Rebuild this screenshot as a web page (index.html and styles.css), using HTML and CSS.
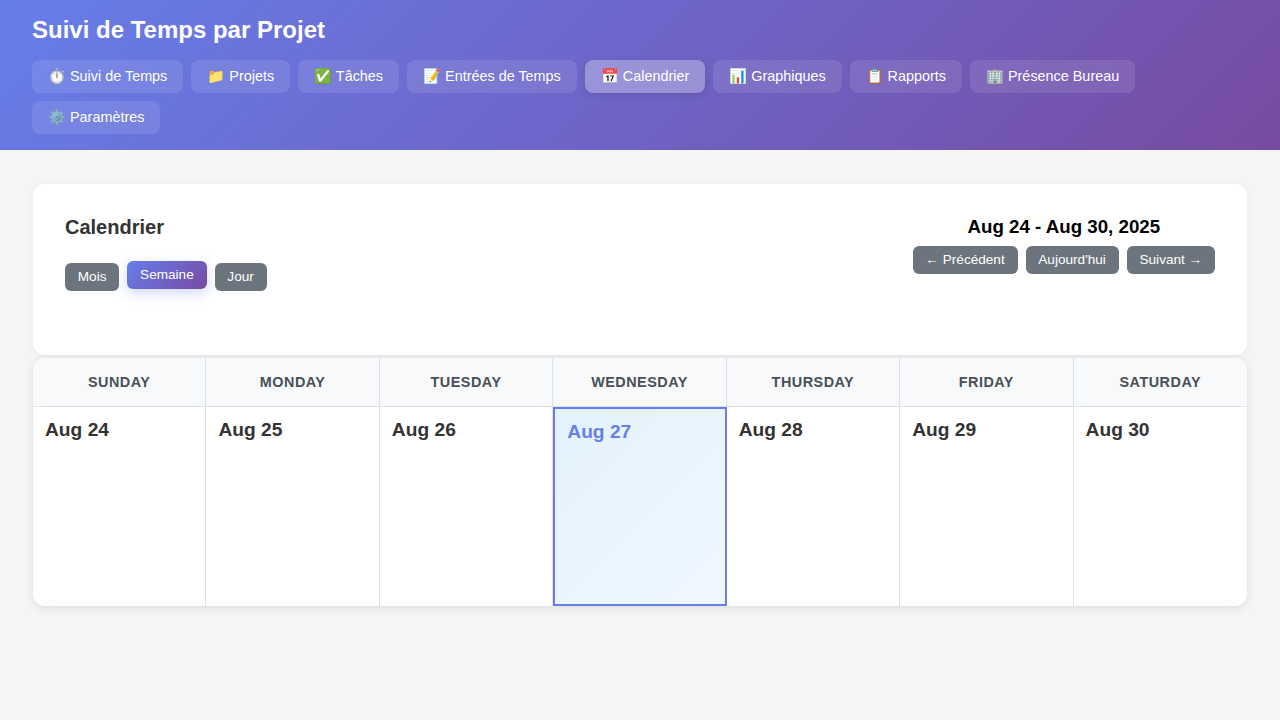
FILE: index.html
```html
<!DOCTYPE html>
<html lang="fr">
<head>
  <meta charset="UTF-8">
  <title>Suivi de Temps par Projet</title>
  <link rel="stylesheet" href="styles.css">
</head>
<body>

<header class="header">
  <h1>Suivi de Temps par Projet</h1>
  <nav class="nav-tabs">
    <button class="nav-tab">⏱️ Suivi de Temps</button>
    <button class="nav-tab">📁 Projets</button>
    <button class="nav-tab">✅ Tâches</button>
    <button class="nav-tab">📝 Entrées de Temps</button>
    <button class="nav-tab active">📅 Calendrier</button>
    <button class="nav-tab">📊 Graphiques</button>
    <button class="nav-tab">📋 Rapports</button>
    <button class="nav-tab">🏢 Présence Bureau</button>
    <button class="nav-tab">⚙️ Paramètres</button>
  </nav>
</header>

<main class="container">
  <section class="card">
    <div class="card-left">
      <h2>Calendrier</h2>
      <div class="view-buttons">
        <button class="btn">Mois</button>
        <button class="btn btn-primary">Semaine</button>
        <button class="btn">Jour</button>
      </div>
    </div>
    <div class="card-right">
      <h3>Aug 24 - Aug 30, 2025</h3>
      <div class="nav-buttons">
        <button class="btn">← Précédent</button>
        <button class="btn">Aujourd'hui</button>
        <button class="btn">Suivant →</button>
      </div>
    </div>
  </section>

  <section class="calendar">
    <div class="day-name">Sunday</div>
    <div class="day-name">Monday</div>
    <div class="day-name">Tuesday</div>
    <div class="day-name">Wednesday</div>
    <div class="day-name">Thursday</div>
    <div class="day-name">Friday</div>
    <div class="day-name">Saturday</div>

    <div class="day"><span class="day-date">Aug 24</span></div>
    <div class="day"><span class="day-date">Aug 25</span></div>
    <div class="day"><span class="day-date">Aug 26</span></div>
    <div class="day today"><span class="day-date">Aug 27</span></div>
    <div class="day"><span class="day-date">Aug 28</span></div>
    <div class="day"><span class="day-date">Aug 29</span></div>
    <div class="day"><span class="day-date">Aug 30</span></div>
  </section>
</main>

</body>
</html>
```

FILE: styles.css
```css
* {
  box-sizing: border-box;
  margin: 0;
  padding: 0;
}
body {
  font-family: "Liberation Sans", Arial, sans-serif;
  background-color: #f5f5f5;
  color: #333;
  min-height: 100vh;
}
button {
  font-family: inherit;
  cursor: pointer;
  border: none;
}
.header {
  height: 150px;
  padding: 16px 32px;
  background: linear-gradient(135deg, #667eea 0%, #764ba2 100%);
  color: white;
}
.header h1 {
  font-size: 24px;
  line-height: 28px;
  font-weight: 700;
  margin-bottom: 16px;
}
.nav-tabs {
  display: flex;
  flex-wrap: wrap;
  gap: 8px;
}
.nav-tab {
  height: 33px;
  padding: 0 16px;
  font-size: 14.4px;
  color: white;
  background: rgba(255,255,255,0.1);
  border-radius: 8px;
}
.nav-tab.active {
  background: rgba(255,255,255,0.3);
  box-shadow: 0 2px 8px rgba(0,0,0,0.1);
}
.container {
  padding: 34px 33px 32px 33px;
}
.card {
  display: flex;
  justify-content: space-between;
  height: 171px;
  padding: 32px;
  margin-bottom: 3px;
  background: white;
  border-radius: 12px;
  box-shadow: 0 2px 10px rgba(0,0,0,0.05);
}
.card h2 {
  font-size: 20px;
  line-height: 23px;
  font-weight: 700;
  margin-bottom: 24px;
}
.view-buttons,
.nav-buttons {
  display: flex;
  gap: 8px;
}
.card-right {
  text-align: center;
}
.card-right h3 {
  font-size: 18.72px;
  line-height: 22px;
  font-weight: 700;
  color: #000;
  margin-bottom: 8px;
}
.btn {
  height: 28px;
  padding: 0 12.8px 2px;
  font-size: 13.6px;
  color: white;
  background: #6c757d;
  border-radius: 6px;
}
.btn-primary {
  background: linear-gradient(135deg, #667eea 0%, #764ba2 100%);
  transform: translateY(-2px);
  box-shadow: 0 4px 12px rgba(102,126,234,0.3);
}
.calendar {
  display: grid;
  grid-template-columns: repeat(7, 1fr);
  grid-template-rows: 49px 199px;
  background: white;
  border-radius: 12px;
  overflow: hidden;
  box-shadow: 0 2px 10px rgba(0,0,0,0.1);
}
.day-name {
  display: flex;
  align-items: center;
  justify-content: center;
  font-size: 14.4px;
  font-weight: 700;
  text-transform: uppercase;
  letter-spacing: 0.5px;
  color: #495057;
  background: #f8f9fa;
  border-right: 1px solid #dee2e6;
  border-bottom: 1px solid #dee2e6;
}
.day-name:nth-child(7) {
  border-right: none;
}
.day {
  padding: 12px;
  border-right: 1px solid #dee2e6;
}
.day:last-child {
  border-right: none;
}
.day-date {
  display: block;
  font-size: 19.2px;
  line-height: 22px;
  font-weight: 700;
  color: #333;
}
.today {
  background: linear-gradient(135deg, #e3f2fd 0%, #f0f8ff 100%);
  border: 2px solid #667eea;
}
.today .day-date {
  color: #667eea;
}
```
